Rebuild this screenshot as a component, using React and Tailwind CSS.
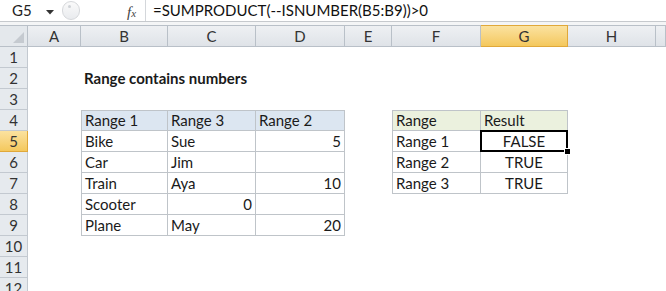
import React from 'react';

const COLS = ['A', 'B', 'C', 'D', 'E', 'F', 'G', 'H', ''];

// sheet contents, keyed by cell address
const CELLS = {
  B2: { v: 'Range contains numbers', bold: true },
  B4: { v: 'Range 1', head: 'blue' },
  C4: { v: 'Range 3', head: 'blue' },
  D4: { v: 'Range 2', head: 'blue' },
  B5: { v: 'Bike' },
  C5: { v: 'Sue' },
  D5: { v: '5', right: true },
  B6: { v: 'Car' },
  C6: { v: 'Jim' },
  D6: { v: '' },
  B7: { v: 'Train' },
  C7: { v: 'Aya' },
  D7: { v: '10', right: true },
  B8: { v: 'Scooter' },
  C8: { v: '0', right: true },
  D8: { v: '' },
  B9: { v: 'Plane' },
  C9: { v: 'May' },
  D9: { v: '20', right: true },
  F4: { v: 'Range', head: 'green' },
  G4: { v: 'Result', head: 'green' },
  F5: { v: 'Range 1' },
  G5: { v: 'FALSE', center: true },
  F6: { v: 'Range 2' },
  G6: { v: 'TRUE', center: true },
  F7: { v: 'Range 3' },
  G7: { v: 'TRUE', center: true },
};

const inTable = (col, row) =>
  (['B', 'C', 'D'].includes(col) && row >= 4 && row <= 9) ||
  (['F', 'G'].includes(col) && row >= 4 && row <= 7);

const Cell = ({ col, row }) => {
  const cell = CELLS[col + row];
  const table = inTable(col, row);
  const top = table && row === 4;
  const left = table && (col === 'B' || col === 'F');
  const selected = col === 'G' && row === 5;

  let bg = table ? 'bg-white' : '';
  if (cell?.head === 'blue') bg = 'bg-[#dce6f1]';
  if (cell?.head === 'green') bg = 'bg-[#ebf1de]';

  let align = 'justify-start pl-[3px]';
  if (cell?.right) align = 'justify-end pr-[3px]';
  if (cell?.center) align = 'justify-center';

  return (
    <div
      className={`relative flex items-center whitespace-nowrap overflow-visible ${bg} ${align} ${
        table ? 'border-r border-b border-[#bfc4c9]' : ''
      } ${top ? 'border-t' : ''} ${left ? 'border-l' : ''} ${cell?.bold ? 'font-bold z-10' : ''} ${
        selected ? 'z-20' : ''
      }`}
    >
      {cell?.v}
      {selected && (
        <>
          <div className="absolute -left-px -top-px -right-px -bottom-px border-2 border-black" />
          <div className="absolute -right-[4px] -bottom-[4px] w-[7px] h-[7px] bg-black border border-white" />
        </>
      )}
    </div>
  );
};

export default function App() {
  const rows = Array.from({ length: 12 }, (_, i) => i + 1);

  return (
    <div className="w-[666px] h-[291px] overflow-hidden bg-white text-[15px] text-[#1a1a1a] font-['Lato','Liberation_Sans',sans-serif]">
      {/* formula bar */}
      <div className="h-[22px] flex items-center border-b border-[#c6c9cd] bg-white">
        <div className="w-[60px] h-full flex items-center pl-[12px] relative">
          <span className="text-[#222]">G5</span>
          <svg className="absolute left-[46px] top-[10px]" width="8" height="5" viewBox="0 0 8 5">
            <polygon points="0,0 8,0 4,4.5" fill="#333" />
          </svg>
        </div>
        <div className="w-[85px] h-full flex items-center relative">
          <div className="absolute left-[2px] top-[1px] w-[18px] h-[19px] rounded-full border border-[#d6d8db] bg-gradient-to-b from-[#fafafa] to-[#e9ebee]" />
          <div className="absolute left-[8px] top-[5px] w-[3px] h-[3px] rounded-full bg-[#cfd2d6]" />
          <span className="absolute left-[67px] top-[1px] italic font-['Liberation_Serif',serif] text-[15px] text-[#444]">
            f<span className="text-[11px]">x</span>
          </span>
        </div>
        <div className="h-full border-l border-[#d4d7db] flex-1 flex items-center pl-[7px] text-[#111]">
          =SUMPRODUCT(--ISNUMBER(B5:B9))&gt;0
        </div>
      </div>
      <div className="h-[3px] bg-[#f4f5f6]" />

      {/* sheet grid */}
      <div className="grid grid-cols-[28px_53px_87px_88px_89px_47px_89px_87px_88px_1fr] grid-rows-[22px_repeat(12,21px)]">
        {/* corner */}
        <div className="relative bg-[#e4e8ec] border-t border-r border-b border-[#b9c0c8]">
          <svg className="absolute right-[3px] bottom-[3px]" width="11" height="11" viewBox="0 0 11 11">
            <polygon points="11,0 11,11 0,11" fill="#c5cad0" />
          </svg>
        </div>
        {COLS.map((c) => (
          <div
            key={c || 'rest'}
            className={`flex items-center justify-center border-t border-r border-b text-[#333] ${
              c === 'G'
                ? 'bg-gradient-to-b from-[#fbe29f] to-[#f4c85c] border-[#e0a83a]'
                : 'bg-gradient-to-b from-[#eef0f3] to-[#dfe3e8] border-[#b9c0c8]'
            }`}
          >
            {c}
          </div>
        ))}

        {rows.map((r) => (
          <React.Fragment key={r}>
            <div
              className={`flex items-center justify-center border-r border-b text-[#333] ${
                r === 5
                  ? 'bg-gradient-to-b from-[#fbe29f] to-[#f4c85c] border-[#e0a83a]'
                  : 'bg-[#e6eaee] border-[#c3c9d0]'
              }`}
            >
              {r}
            </div>
            {COLS.map((c) => (c ? <Cell key={c} col={c} row={r} /> : <div key="rest" />))}
          </React.Fragment>
        ))}
      </div>
    </div>
  );
}
